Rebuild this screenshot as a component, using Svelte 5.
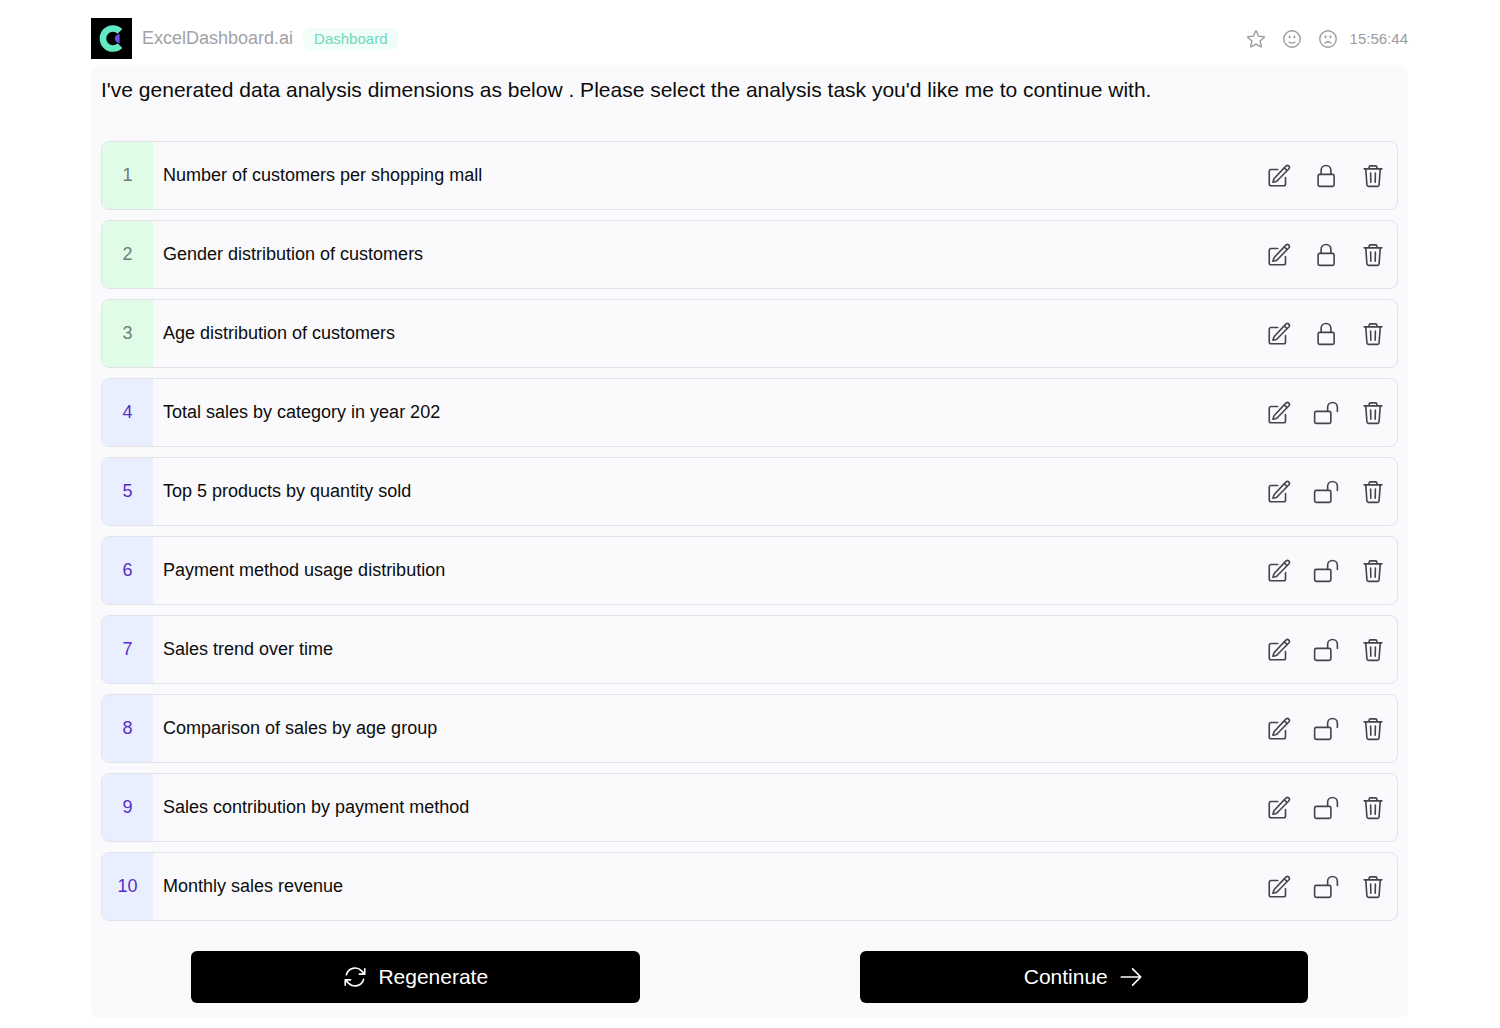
<script lang="ts">
	type Task = { id: number; title: string; locked: boolean };

	const icons = {
		star: 'M11.48 3.499a.562.562 0 011.04 0l2.125 5.111a.563.563 0 00.475.345l5.518.442c.499.04.701.663.321.988l-4.204 3.602a.563.563 0 00-.182.557l1.285 5.385a.562.562 0 01-.84.61l-4.725-2.885a.563.563 0 00-.586 0L6.982 20.54a.562.562 0 01-.84-.61l1.285-5.386a.562.562 0 00-.182-.557l-4.204-3.602a.563.563 0 01.321-.988l5.518-.442a.563.563 0 00.475-.345L11.48 3.5z',
		smile: 'M15.182 15.182a4.5 4.5 0 01-6.364 0M21 12a9 9 0 11-18 0 9 9 0 0118 0zM9.75 9.75c0 .414-.168.75-.375.75S9 10.164 9 9.75 9.168 9 9.375 9s.375.336.375.75zm-.375 0h.008v.015h-.008V9.75zm5.625 0c0 .414-.168.75-.375.75s-.375-.336-.375-.75.168-.75.375-.75.375.336.375.75zm-.375 0h.008v.015h-.008V9.75z',
		frown: 'M15.182 16.318A4.486 4.486 0 0012.016 15a4.486 4.486 0 00-3.198 1.318M21 12a9 9 0 11-18 0 9 9 0 0118 0zM9.75 9.75c0 .414-.168.75-.375.75S9 10.164 9 9.75 9.168 9 9.375 9s.375.336.375.75zm-.375 0h.008v.015h-.008V9.75zm5.625 0c0 .414-.168.75-.375.75s-.375-.336-.375-.75.168-.75.375-.75.375.336.375.75zm-.375 0h.008v.015h-.008V9.75z',
		edit: 'M17.2 4l1.4-1.3a1.85 1.85 0 012.6 2.6L10.6 16.2a4.5 4.5 0 01-1.9 1.1L6.4 17.8l.7-2.3a4.5 4.5 0 011.1-1.9L17.2 4zM16.8 4.4l2.7 2.7M18 13.5v5.9a1.6 1.6 0 01-1.6 1.6H4.6A1.6 1.6 0 013 19.4V7.6A1.6 1.6 0 014.6 6h6.2',
		locked:
			'M16.5 10.5V6.75a4.5 4.5 0 10-9 0v3.75M6.2 21.6h11.8a1.5 1.5 0 001.5-1.5V12a1.5 1.5 0 00-1.5-1.5H6.2A1.5 1.5 0 004.7 12v8.1a1.5 1.5 0 001.5 1.5z',
		unlocked:
			'M13.5 10.5V6.75a4.5 4.5 0 119 0v3.75M3 21.6h12a1.5 1.5 0 001.5-1.5V12a1.5 1.5 0 00-1.5-1.5H3A1.5 1.5 0 001.5 12v8.1A1.5 1.5 0 003 21.6z',
		trash: 'M3.8 5.4h16.4M8.4 5.4V4a1.4 1.4 0 011.4-1.4h4.4A1.4 1.4 0 0115.6 4v1.4M5.3 5.4l1.1 14.9a1.4 1.4 0 001.4 1.3h8.4a1.4 1.4 0 001.4-1.3l1.1-14.9M9.8 9.4l.2 8.4M14.2 9.4l-.2 8.4',
		refresh:
			'M16.023 9.348h4.992v-.001M2.985 19.644v-4.992m0 0h4.992m-4.993 0l3.181 3.183a8.25 8.25 0 0013.803-3.7M4.031 9.865a8.25 8.25 0 0113.803-3.7l3.181 3.182m0-4.991v4.99',
		arrow: 'M13.5 4.5L21 12m0 0l-7.5 7.5M21 12H3'
	};

	let tasks: Task[] = $state([
		{ id: 1, title: 'Number of customers per shopping mall', locked: true },
		{ id: 2, title: 'Gender distribution of customers', locked: true },
		{ id: 3, title: 'Age distribution of customers', locked: true },
		{ id: 4, title: 'Total sales by category in year 202', locked: false },
		{ id: 5, title: 'Top 5 products by quantity sold', locked: false },
		{ id: 6, title: 'Payment method usage distribution', locked: false },
		{ id: 7, title: 'Sales trend over time', locked: false },
		{ id: 8, title: 'Comparison of sales by age group', locked: false },
		{ id: 9, title: 'Sales contribution by payment method', locked: false },
		{ id: 10, title: 'Monthly sales revenue', locked: false }
	]);

	function editTask(task: Task) {
		const title = prompt('Edit analysis task', task.title);
		if (title) task.title = title;
	}

	function removeTask(id: number) {
		tasks = tasks.filter((task) => task.id !== id);
	}
</script>

{#snippet icon(path: string)}
	<svg viewBox="0 0 24 24" aria-hidden="true"><path d={path} /></svg>
{/snippet}

<div class="container">
	<header class="header">
		<svg class="logo" viewBox="0 0 41 41" aria-hidden="true">
			<rect width="41" height="41" fill="#000" />
			<path
				d="M29 13.4A10 10 0 1 0 29 27.6"
				fill="none"
				stroke="#62e9c3"
				stroke-width="6.6"
				stroke-linecap="butt"
			/>
			<path d="M28.6 16v9q-4.8-.8-4.8-4.5t4.8-4.5z" fill="#6d4ee0" />
		</svg>
		<span class="name">ExcelDashboard.ai</span>
		<span class="tag">Dashboard</span>
		<div class="feedback">
			<button aria-label="Favorite">{@render icon(icons.star)}</button>
			<button aria-label="Good answer">{@render icon(icons.smile)}</button>
			<button aria-label="Bad answer">{@render icon(icons.frown)}</button>
		</div>
		<time class="time">15:56:44</time>
	</header>

	<main class="panel">
		<p class="message">
			I've generated data analysis dimensions as below . Please select the analysis task you'd like me
			to continue with.
		</p>

		<ul class="tasks">
			{#each tasks as task (task.id)}
				<li class="task">
					<span class="number" class:locked={task.locked}>{task.id}</span>
					<span class="title">{task.title}</span>
					<div class="actions">
						<button aria-label="Edit" onclick={() => editTask(task)}>{@render icon(icons.edit)}</button>
						<button
							aria-label={task.locked ? 'Unlock' : 'Lock'}
							onclick={() => (task.locked = !task.locked)}
						>
							{@render icon(task.locked ? icons.locked : icons.unlocked)}
						</button>
						<button aria-label="Delete" onclick={() => removeTask(task.id)}>
							{@render icon(icons.trash)}
						</button>
					</div>
				</li>
			{/each}
		</ul>

		<div class="footer">
			<button class="btn">{@render icon(icons.refresh)} Regenerate</button>
			<button class="btn">Continue {@render icon(icons.arrow)}</button>
		</div>
	</main>
</div>

<style>
	:global(body) {
		margin: 0;
		background: #fff;
	}

	.container {
		padding: 18px 92px 10px 91px;
		font-family: 'Liberation Sans', Arial, sans-serif;
		color: #0c0c0c;
	}

	button {
		display: flex;
		padding: 0;
		border: none;
		background: none;
		color: inherit;
		font: inherit;
		cursor: pointer;
	}

	svg {
		display: block;
		flex: none;
		width: 26px;
		height: 26px;
		fill: none;
		stroke: currentColor;
		stroke-width: 1.5;
		stroke-linecap: round;
		stroke-linejoin: round;
	}

	.header {
		display: flex;
		align-items: center;
		padding-bottom: 6px;
		color: #9a9ca1;
		font-size: 15px;
	}

	.logo {
		width: 41px;
		height: 41px;
		stroke: none;
	}

	.name {
		margin: 0 10px;
		font-size: 18px;
		color: #a0a2a8;
	}

	.tag {
		padding: 0 11px;
		border-radius: 8px;
		background: #f0fdf9;
		color: #6fd9bd;
		line-height: 22px;
	}

	.feedback {
		display: flex;
		gap: 14px;
		margin: 0 11px 0 auto;
	}

	.feedback svg {
		width: 22px;
		height: 22px;
	}

	.panel {
		padding: 10px 0 15px;
		border-radius: 8px;
		background: #fafafc;
	}

	.message {
		margin: 0 10px 36px;
		font-size: 21px;
		line-height: 30px;
	}

	.tasks {
		display: flex;
		flex-direction: column;
		gap: 10px;
		margin: 0 10px;
		padding: 0;
		list-style: none;
	}

	.task {
		display: flex;
		align-items: center;
		border: 1px solid #e1e3e8;
		border-radius: 8px;
		overflow: hidden;
		font-size: 18px;
		line-height: 67px;
	}

	.number {
		width: 51px;
		background: #e9effe;
		color: #5530c8;
		text-align: center;
	}

	.number.locked {
		background: #e0fbe6;
		color: #6b7c80;
	}

	.title {
		flex: 1;
		padding: 0 10px;
	}

	.actions {
		display: flex;
		gap: 21px;
		padding-right: 11px;
		color: #42454f;
	}

	.footer {
		display: grid;
		grid-template-columns: 1fr 1fr;
		gap: 20px;
		margin-top: 30px;
	}

	.btn {
		align-items: center;
		justify-content: center;
		gap: 10px;
		height: 52px;
		margin: 0 100px;
		border-radius: 6px;
		background: #000;
		color: #fff;
		font-size: 21px;
	}
</style>
